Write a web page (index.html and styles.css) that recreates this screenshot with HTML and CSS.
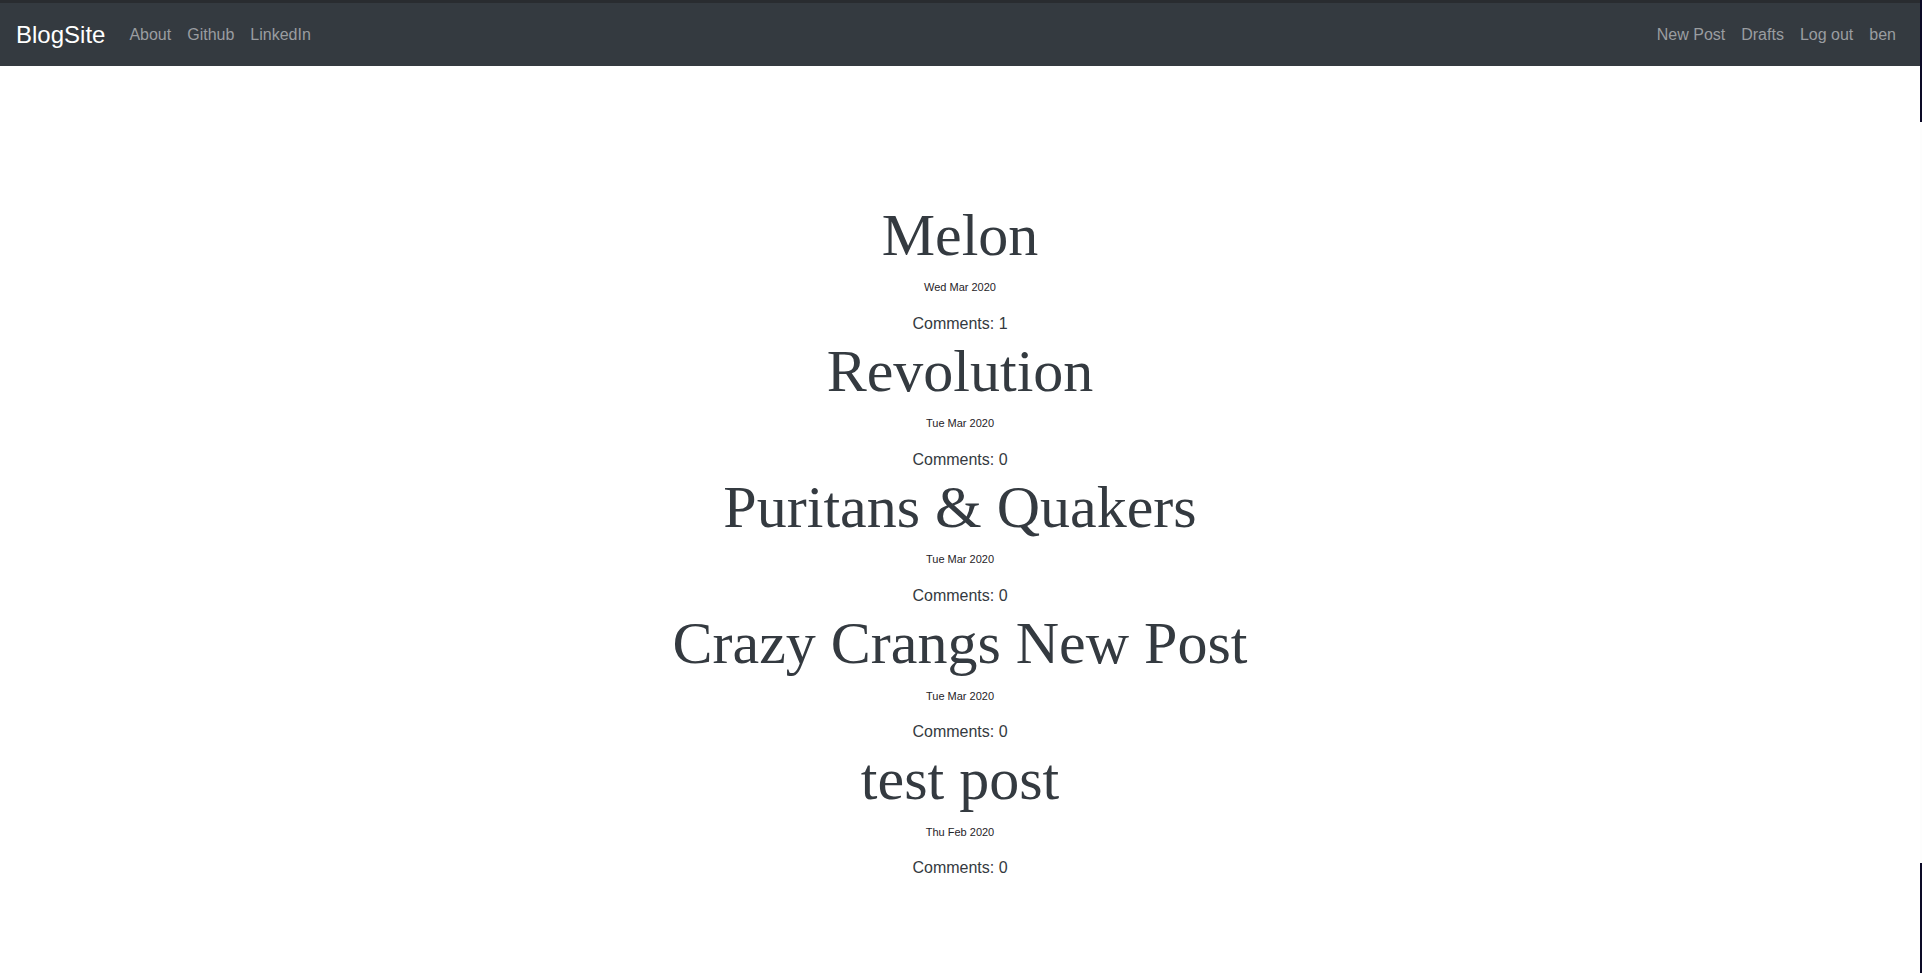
FILE: index.html
```html
<!DOCTYPE html>
<html lang="en">
<head>
<meta charset="utf-8">
<title>BlogSite</title>
<link rel="stylesheet" href="styles.css">
</head>
<body>
<div class="page">
  <div class="topline"></div>
  <nav class="navbar">
    <a class="brand" href="#">BlogSite</a>
    <ul class="nav">
      <li><a href="#">About</a></li>
      <li><a href="#">Github</a></li>
      <li><a href="#">LinkedIn</a></li>
    </ul>
    <ul class="nav nav-right">
      <li><a href="#">New Post</a></li>
      <li><a href="#">Drafts</a></li>
      <li><a href="#">Log out</a></li>
      <li><a href="#">ben</a></li>
    </ul>
  </nav>
  <main class="posts">
    <article class="post">
      <h1 class="post-title">Melon</h1>
      <div class="post-date">Wed Mar 2020</div>
      <p class="post-comments">Comments: 1</p>
    </article>
    <article class="post">
      <h1 class="post-title">Revolution</h1>
      <div class="post-date">Tue Mar 2020</div>
      <p class="post-comments">Comments: 0</p>
    </article>
    <article class="post">
      <h1 class="post-title">Puritans &amp; Quakers</h1>
      <div class="post-date">Tue Mar 2020</div>
      <p class="post-comments">Comments: 0</p>
    </article>
    <article class="post">
      <h1 class="post-title">Crazy Crangs New Post</h1>
      <div class="post-date">Tue Mar 2020</div>
      <p class="post-comments">Comments: 0</p>
    </article>
    <article class="post">
      <h1 class="post-title">test post</h1>
      <div class="post-date">Thu Feb 2020</div>
      <p class="post-comments">Comments: 0</p>
    </article>
  </main>
</div>
<div class="edge"></div>
</body>
</html>
```
FILE: styles.css
```css
html, body {
  margin: 0;
  padding: 0;
  height: 100%;
  background: #ffffff;
}
body {
  display: flex;
  flex-direction: row;
  font-family: "Liberation Sans", Arial, sans-serif;
  overflow: hidden;
}
.page {
  flex: 1;
  min-width: 0;
}
.edge {
  width: 2px;
  flex: 0 0 2px;
  background: linear-gradient(to bottom,
    #0c0a26 0, #0c0a26 122px,
    #fdfdfd 122px, #fdfdfd 863px,
    #0c0a26 863px, #0c0a26 100%);
}
.topline {
  height: 3px;
  background: #292c30;
}
.navbar {
  height: 62.5px;
  box-sizing: border-box;
  padding: 1px 16px 0 16px;
  background: #343a40;
  display: flex;
  align-items: center;
}
.brand {
  color: #ffffff;
  font-size: 24px;
  line-height: 30px;
  text-decoration: none;
  margin-right: 16px;
}
.nav {
  list-style: none;
  margin: 0;
  padding: 0;
  display: flex;
}
.nav-right {
  margin-left: auto;
}
.nav a {
  display: block;
  padding: 0 8px;
  font-size: 16px;
  line-height: 24px;
  color: #9a9da0;
  text-decoration: none;
}
.posts {
  padding-top: 141px;
  text-align: center;
}
.post {
  padding-bottom: 8.8px;
}
.post-title {
  margin: 0;
  font-family: "Liberation Serif", "Times New Roman", serif;
  font-weight: 400;
  font-size: 60px;
  line-height: 56px;
  color: #343a40;
}
.post-date {
  margin-top: 17.8px;
  font-size: 11px;
  line-height: 14px;
  color: #1f2328;
}
.post-comments {
  margin: 19.5px 0 0 0;
  font-size: 16px;
  line-height: 20px;
  color: #343a40;
}
```
